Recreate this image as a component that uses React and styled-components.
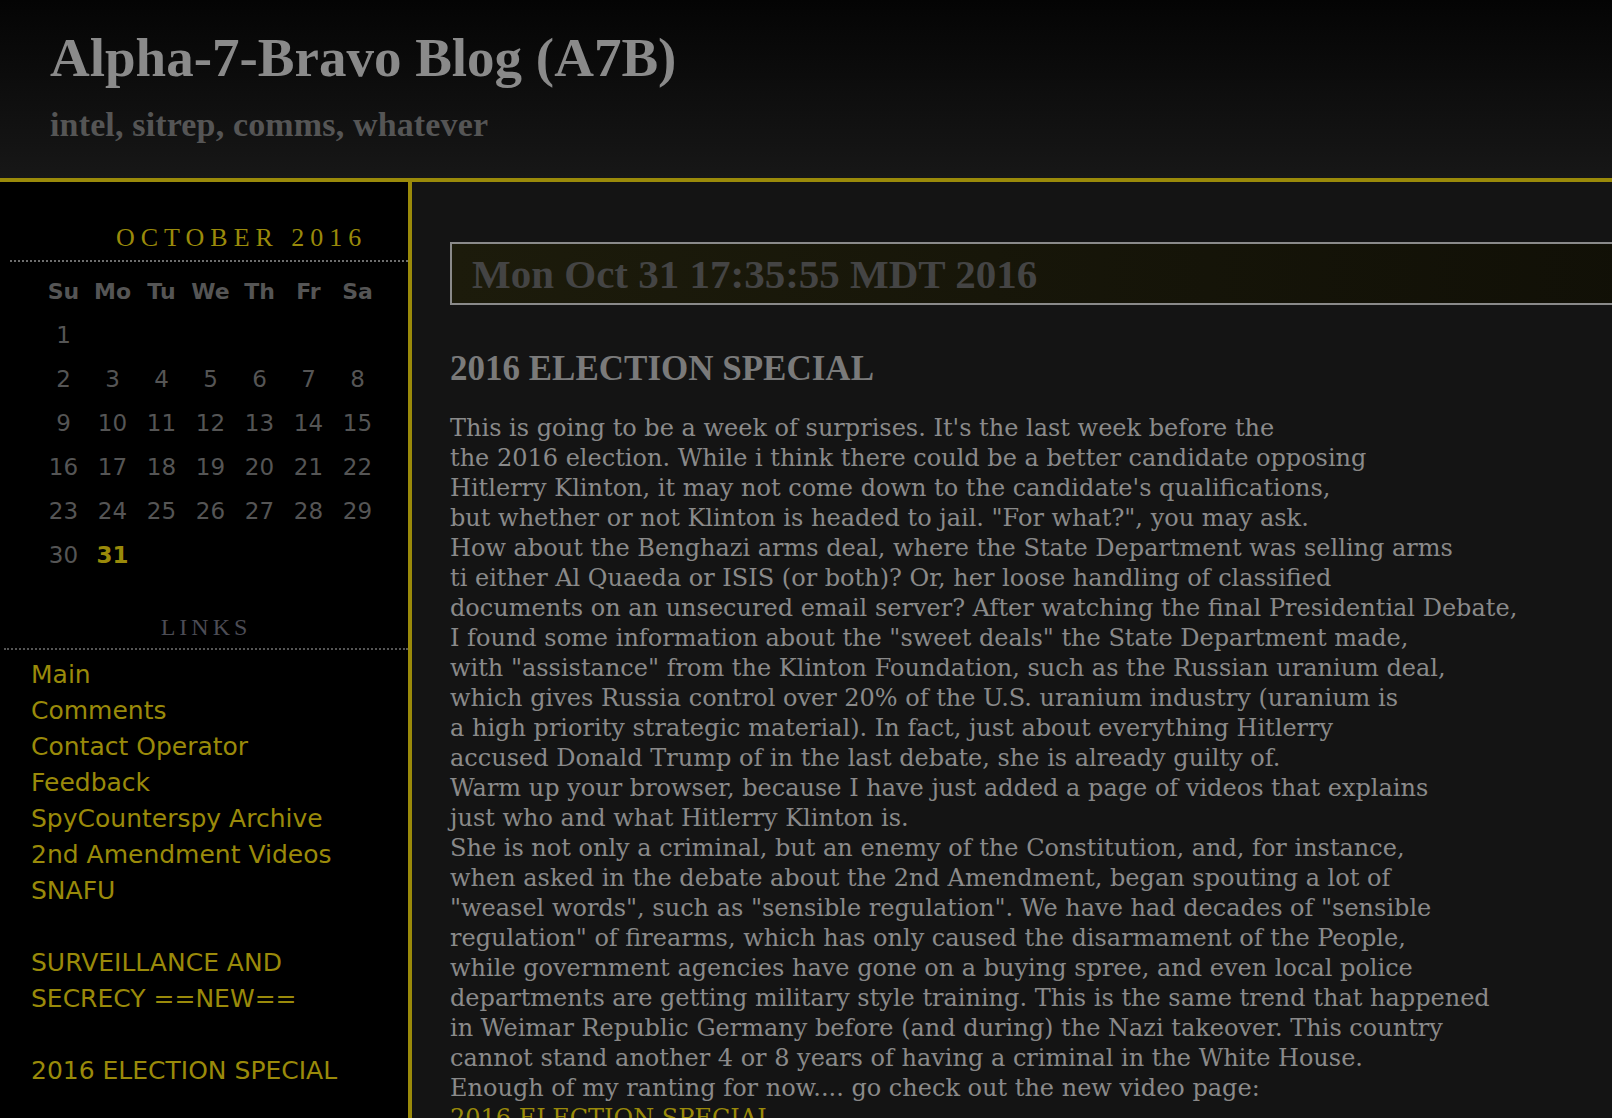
import styled, { createGlobalStyle } from "styled-components";

const GlobalStyle = createGlobalStyle`
  html, body {
    margin: 0;
    padding: 0;
    background: #141414;
  }
  body {
    font-family: "Liberation Serif", serif;
  }
`;

const calendarRows = [
  ["1"],
  ["2", "3", "4", "5", "6", "7", "8"],
  ["9", "10", "11", "12", "13", "14", "15"],
  ["16", "17", "18", "19", "20", "21", "22"],
  ["23", "24", "25", "26", "27", "28", "29"],
  ["30", "31"],
];

const days = ["Su", "Mo", "Tu", "We", "Th", "Fr", "Sa"];

const links = [
  "Main",
  "Comments",
  "Contact Operator",
  "Feedback",
  "SpyCounterspy Archive",
  "2nd Amendment Videos",
  "SNAFU",
  null,
  "SURVEILLANCE AND",
  "SECRECY ==NEW==",
  null,
  "2016 ELECTION SPECIAL",
];

const bodyLines = [
  "This is going to be a week of surprises. It's the last week before the",
  "the 2016 election. While i think there could be a better candidate opposing",
  "Hitlerry Klinton, it may not come down to the candidate's qualifications,",
  "but whether or not Klinton is headed to jail. \"For what?\", you may ask.",
  "How about the Benghazi arms deal, where the State Department was selling arms",
  "ti either Al Quaeda or ISIS (or both)? Or, her loose handling of classified",
  "documents on an unsecured email server? After watching the final Presidential Debate,",
  "I found some information about the \"sweet deals\" the State Department made,",
  "with \"assistance\" from the Klinton Foundation, such as the Russian uranium deal,",
  "which gives Russia control over 20% of the U.S. uranium industry (uranium is",
  "a high priority strategic material). In fact, just about everything Hitlerry",
  "accused Donald Trump of in the last debate, she is already guilty of.",
  "Warm up your browser, because I have just added a page of videos that explains",
  "just who and what Hitlerry Klinton is.",
  "She is not only a criminal, but an enemy of the Constitution, and, for instance,",
  "when asked in the debate about the 2nd Amendment, began spouting a lot of",
  "\"weasel words\", such as \"sensible regulation\". We have had decades of \"sensible",
  "regulation\" of firearms, which has only caused the disarmament of the People,",
  "while government agencies have gone on a buying spree, and even local police",
  "departments are getting military style training. This is the same trend that happened",
  "in Weimar Republic Germany before (and during) the Nazi takeover. This country",
  "cannot stand another 4 or 8 years of having a criminal in the White House.",
  "Enough of my ranting for now.... go check out the new video page:",
];

const App = () => {
  return (
    <>
      <GlobalStyle />
      <Header>
        <Title>Alpha-7-Bravo Blog (A7B)</Title>
        <Tagline>intel, sitrep, comms, whatever</Tagline>
      </Header>
      <Layout>
        <Sidebar>
          <CalCaption>OCTOBER 2016</CalCaption>
          <CalGrid>
            {days.map((d) => (
              <DayHead key={d}>{d}</DayHead>
            ))}
            {calendarRows.map((row, i) =>
              [0, 1, 2, 3, 4, 5, 6].map((c) => (
                <DayCell key={i + "-" + c} today={row[c] === "31"}>
                  {row[c] || ""}
                </DayCell>
              ))
            )}
          </CalGrid>
          <SectionTitle>LINKS</SectionTitle>
          <LinkList>
            {links.map((l, i) =>
              l ? (
                <LinkItem key={i} href="#">
                  {l}
                </LinkItem>
              ) : (
                <Spacer key={i} />
              )
            )}
          </LinkList>
        </Sidebar>
        <Main>
          <DateBox>
            <DateText>Mon Oct 31 17:35:55 MDT 2016</DateText>
          </DateBox>
          <PostTitle>2016 ELECTION SPECIAL</PostTitle>
          <PostBody>
            {bodyLines.map((line, i) => (
              <Line key={i}>{line}</Line>
            ))}
            <PostLink href="#">2016 ELECTION SPECIAL</PostLink>
          </PostBody>
        </Main>
      </Layout>
    </>
  );
};

export default App;

const Header = styled.div`
  height: 182px;
  padding-left: 50px;
  box-sizing: border-box;
  background: linear-gradient(to bottom, #040404, #171717);
  border-bottom: 4px solid #9a8a0a;
  overflow: hidden;
`;

const Title = styled.h1`
  margin: 0;
  padding-top: 28px;
  font-family: "Liberation Serif", serif;
  font-weight: bold;
  font-size: 55px;
  line-height: 60px;
  color: #8a8a8a;
`;

const Tagline = styled.div`
  margin-top: 18px;
  font-family: "Liberation Serif", serif;
  font-weight: bold;
  font-size: 34px;
  line-height: 38px;
  letter-spacing: 0.15px;
  color: #555;
`;

const Layout = styled.div`
  display: grid;
  grid-template-columns: 412px 1fr;
  min-height: 940px;
`;

const Sidebar = styled.div`
  background: #000;
  border-right: 4px solid #9a8a0a;
  padding-top: 40px;
  padding-bottom: 60px;
`;

const CalCaption = styled.div`
  margin-left: 10px;
  padding: 0 0 6px 106px;
  border-bottom: 2px dotted #6e6e6e;
  font-family: "Liberation Serif", serif;
  font-size: 26px;
  line-height: 32px;
  letter-spacing: 6px;
  color: #9a8a0a;
`;

const CalGrid = styled.div`
  display: grid;
  grid-template-columns: repeat(7, 49px);
  grid-auto-rows: 44px;
  margin: 7px 0 0 39px;
  font-family: "DejaVu Sans", Verdana, sans-serif;
`;

const DayHead = styled.div`
  display: flex;
  align-items: center;
  justify-content: center;
  font-size: 22px;
  font-weight: bold;
  color: #555;
`;

const DayCell = styled.div`
  display: flex;
  align-items: center;
  justify-content: center;
  font-size: 23px;
  font-weight: ${({ today }) => (today ? "bold" : "normal")};
  color: ${({ today }) => (today ? "#9a8a0a" : "#555")};
`;

const SectionTitle = styled.div`
  margin: 35px 0 0 4px;
  padding-bottom: 6px;
  border-bottom: 2px dotted #555;
  text-align: center;
  font-family: "Liberation Serif", serif;
  font-size: 24px;
  line-height: 30px;
  letter-spacing: 4px;
  color: #4c4c55;
`;

const LinkList = styled.div`
  display: flex;
  flex-direction: column;
  align-items: flex-start;
  padding: 7px 0 0 31px;
`;

const LinkItem = styled.a`
  font-family: "DejaVu Sans", Verdana, sans-serif;
  font-size: 25px;
  line-height: 36px;
  color: #9a8a0a;
  text-decoration: none;
`;

const Spacer = styled.div`
  height: 36px;
`;

const Main = styled.div`
  padding: 60px 0 0 38px;
  overflow: hidden;
`;

const DateBox = styled.div`
  width: 1300px;
  height: 63px;
  box-sizing: border-box;
  border: 2px solid #8a8a8a;
  padding-left: 20px;
  display: flex;
  align-items: center;
  background: linear-gradient(to right, #1c1b0b, #100f06);
`;

const DateText = styled.div`
  font-family: "Liberation Serif", serif;
  font-weight: bold;
  font-size: 41px;
  color: #444;
`;

const PostTitle = styled.h2`
  margin: 44px 0 0;
  font-family: "Liberation Serif", serif;
  font-weight: bold;
  font-size: 35px;
  line-height: 40px;
  color: #7a7a7a;
`;

const PostBody = styled.div`
  margin-top: 24px;
  font-family: "DejaVu Serif", serif;
  font-size: 24px;
  line-height: 30px;
  color: #8a8a8a;
`;

const Line = styled.div`
  white-space: nowrap;
`;

const PostLink = styled.a`
  color: #9a8a0a;
  text-decoration: none;
`;
